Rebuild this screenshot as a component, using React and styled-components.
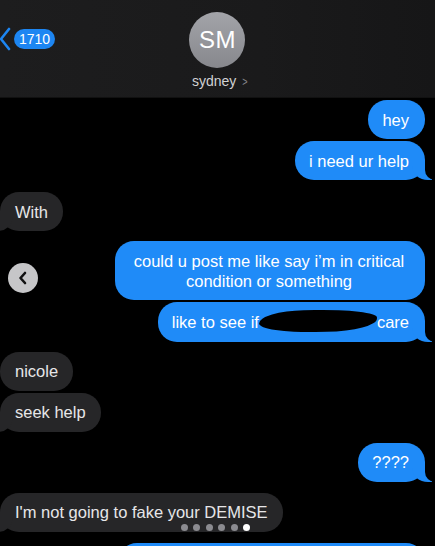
import styled, { createGlobalStyle } from "styled-components";

const GlobalStyle = createGlobalStyle`
  html, body {
    margin: 0;
    padding: 0;
    background: #000;
  }
  * {
    box-sizing: border-box;
  }
`;

const BLUE = "#1f8bf8";
const GREY = "#262628";

const Screen = styled.div`
  position: relative;
  width: 435px;
  height: 546px;
  overflow: hidden;
  background: #000;
  font-family: "Liberation Sans", Arial, sans-serif;
  color: #fff;
`;

const Header = styled.header`
  height: 98px;
  display: grid;
  grid-template-columns: 1fr auto 1fr;
  background: linear-gradient(to right, #1d1d1e, #1a1a1b 60%, #161617);
  border-bottom: 1px solid #111;
`;

const BackGroup = styled.div`
  display: flex;
  align-items: center;
  gap: 3px;
  margin-top: 28px;
  align-self: start;
  height: 22px;
`;

const Chevron = styled.svg`
  width: 12px;
  height: 24px;
  margin-left: -1px;
`;

const Badge = styled.span`
  background: #1d86f2;
  color: #fff;
  font-size: 14px;
  line-height: 20px;
  height: 20px;
  padding: 0 5px;
  border-radius: 10px;
`;

const Contact = styled.div`
  display: flex;
  flex-direction: column;
  align-items: center;
  padding-top: 12px;
`;

const Avatar = styled.div`
  width: 56px;
  height: 56px;
  border-radius: 50%;
  background: linear-gradient(#a3a4a9, #87888d);
  display: flex;
  align-items: center;
  justify-content: center;
  font-size: 24px;
  font-weight: 500;
  letter-spacing: 0.5px;
  color: #fff;
`;

const Name = styled.div`
  margin-top: 5px;
  font-size: 14px;
  color: #d2d2d4;
  display: flex;
  align-items: center;
  gap: 5px;
  padding-left: 6px;
`;

const NameArrow = styled.span`
  color: #86868b;
  font-size: 13px;
  transform: scaleX(0.7);
`;

const Thread = styled.div`
  display: flex;
  flex-direction: column;
  padding-top: 2px;
`;

const Row = styled.div`
  display: flex;
  align-items: center;
  justify-content: ${(p) => (p.$me ? "flex-end" : "flex-start")};
  margin-top: ${(p) => p.$gap || 0}px;
  padding-right: ${(p) => (p.$me ? 10 : 0)}px;
`;

const SpreadRow = styled(Row)`
  justify-content: space-between;
`;

const Bubble = styled.div`
  position: relative;
  max-width: 310px;
  padding: ${(p) => (p.$me ? "9.5px 16px 9.5px 14px" : "9.5px 15px 9.5px 15px")};
  border-radius: 19px;
  background: ${(p) => (p.$me ? BLUE : GREY)};
  color: ${(p) => (p.$me ? "#fff" : "#e6e6e8")};
  font-size: 16.5px;
  line-height: 20px;
  text-align: ${(p) => (p.$center ? "center" : "left")};

  ${(p) =>
    p.$tail &&
    (p.$me
      ? `
    &::before {
      content: "";
      position: absolute;
      bottom: 0;
      right: -7px;
      width: 20px;
      height: 20px;
      background: ${BLUE};
      border-bottom-left-radius: 16px 14px;
    }
    &::after {
      content: "";
      position: absolute;
      bottom: 0;
      right: -26px;
      width: 26px;
      height: 21px;
      background: #000;
      border-bottom-left-radius: 10px;
    }
  `
      : `
    &::before {
      content: "";
      position: absolute;
      bottom: 0;
      left: -7px;
      width: 20px;
      height: 20px;
      background: ${GREY};
      border-bottom-right-radius: 16px 14px;
    }
    &::after {
      content: "";
      position: absolute;
      bottom: 0;
      left: -26px;
      width: 26px;
      height: 21px;
      background: #000;
      border-bottom-right-radius: 10px;
    }
  `)}
`;

const Redacted = styled.span`
  display: inline-block;
  vertical-align: middle;
  width: 118px;
  height: 22px;
  margin: -4px 0 0 0;
  background: #000;
  border-radius: 40% 55% 45% 50% / 60% 40% 60% 45%;
  transform: rotate(-1deg);
`;

const SideButton = styled.button`
  width: 30px;
  height: 30px;
  margin: 14px 0 0 8px;
  border: none;
  border-radius: 50%;
  background: #c6c6c8;
  display: flex;
  align-items: center;
  justify-content: center;
  padding: 0;
`;

const Dots = styled.div`
  position: absolute;
  left: 0;
  right: 0;
  bottom: 15px;
  display: flex;
  justify-content: center;
  gap: 5.5px;
  padding-right: 4px;
`;

const Dot = styled.span`
  width: 7px;
  height: 7px;
  border-radius: 50%;
  background: ${(p) => (p.$active ? "#fff" : "#8b8b90")};
`;

const App = () => {
  return (
    <>
      <GlobalStyle />
      <Screen>
        <Header>
          <BackGroup>
            <Chevron viewBox="0 0 12 24">
              <path
                d="M10 2 L2 12 L10 22"
                fill="none"
                stroke="#1d86f2"
                strokeWidth="2.6"
                strokeLinecap="round"
                strokeLinejoin="round"
              />
            </Chevron>
            <Badge>1710</Badge>
          </BackGroup>
          <Contact>
            <Avatar>SM</Avatar>
            <Name>
              sydney <NameArrow>&gt;</NameArrow>
            </Name>
          </Contact>
          <div />
        </Header>

        <Thread>
          <Row $me>
            <Bubble $me>hey</Bubble>
          </Row>
          <Row $me $gap={2}>
            <Bubble $me $tail>
              i need ur help
            </Bubble>
          </Row>
          <Row $gap={12}>
            <Bubble $tail>With</Bubble>
          </Row>
          <SpreadRow $me $gap={10}>
            <SideButton>
              <svg width="12" height="14" viewBox="0 0 12 14">
                <path
                  d="M8 2 L3.5 7 L8 12"
                  fill="none"
                  stroke="#111"
                  strokeWidth="2.6"
                  strokeLinecap="round"
                  strokeLinejoin="round"
                />
              </svg>
            </SideButton>
            <Bubble $me $center>
              could u post me like say i’m in critical condition or something
            </Bubble>
          </SpreadRow>
          <Row $me $gap={2}>
            <Bubble $me $tail>
              like to see if<Redacted />care
            </Bubble>
          </Row>
          <Row $gap={10}>
            <Bubble>nicole</Bubble>
          </Row>
          <Row $gap={2}>
            <Bubble $tail>seek help</Bubble>
          </Row>
          <Row $me $gap={11}>
            <Bubble $me $tail>
              ????
            </Bubble>
          </Row>
          <Row $gap={11}>
            <Bubble $tail>I'm not going to fake your DEMISE</Bubble>
          </Row>
          <Row $me $gap={11}>
            <Bubble $me style={{ width: 307 }}>
              &nbsp;
            </Bubble>
          </Row>
        </Thread>

        <Dots>
          {[0, 1, 2, 3, 4, 5].map((i) => (
            <Dot key={i} $active={i === 5} />
          ))}
        </Dots>
      </Screen>
    </>
  );
};

export default App;
